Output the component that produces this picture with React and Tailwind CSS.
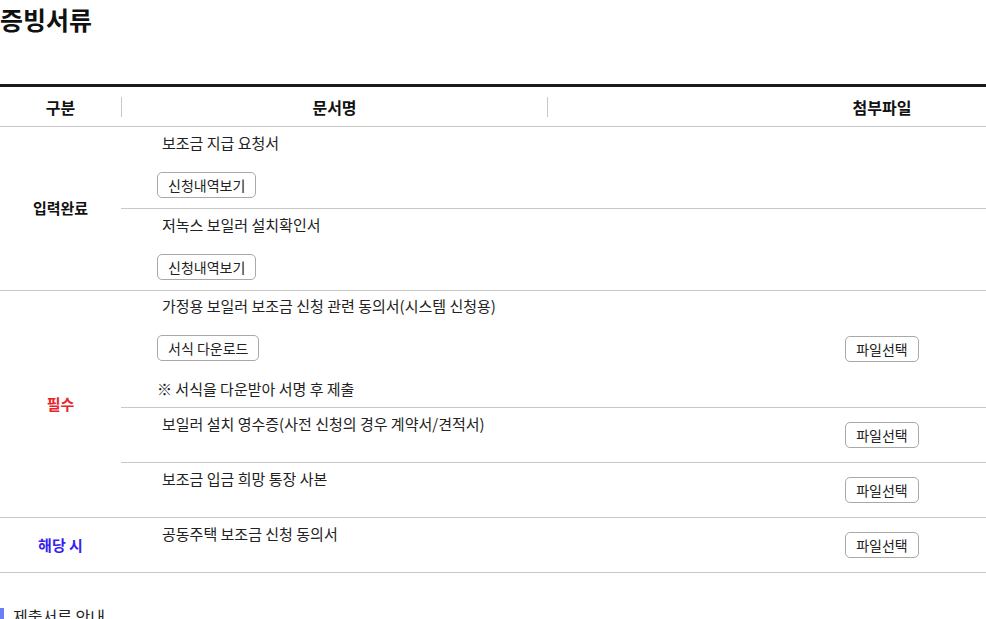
import { useState } from "react";

const groups = [
  {
    label: "입력완료",
    labelClass: "text-[#111]",
    rows: [
      { title: "보조금 지급 요청서", action: "신청내역보기", tall: true },
      { title: "저녹스 보일러 설치확인서", action: "신청내역보기", tall: true },
    ],
  },
  {
    label: "필수",
    labelClass: "text-[#e8242a]",
    rows: [
      {
        title: "가정용 보일러 보조금 신청 관련 동의서(시스템 신청용)",
        action: "서식 다운로드",
        note: "※ 서식을 다운받아 서명 후 제출",
        file: true,
      },
      { title: "보일러 설치 영수증(사전 신청의 경우 계약서/견적서)", file: true },
      { title: "보조금 입금 희망 통장 사본", file: true },
    ],
  },
  {
    label: "해당 시",
    labelClass: "text-[#3a1ef0]",
    rows: [{ title: "공동주택 보조금 신청 동의서", file: true }],
  },
];

function SmallButton({ children, onClick }) {
  return (
    <button
      onClick={onClick}
      className="h-[26px] px-[10px] border border-[#a9a9a9] rounded-[5px] bg-white text-[14px] leading-none text-[#222] whitespace-nowrap"
    >
      {children}
    </button>
  );
}

function DocRow({ row, last, onPick, picked }) {
  return (
    <div className={`flex ${last ? "" : "border-b border-[#c8c8c8]"}`}>
      <div
        className={`flex-1 pl-[36px] ${
          row.note
            ? "pt-[5px] pb-[8px]"
            : row.tall
              ? "pt-[6px] pb-[10px]"
              : "pt-[6px] h-[54px]"
        }`}
      >
        <p className="pl-[5px] text-[15px] leading-[20px] text-[#222]">{row.title}</p>
        {row.action && (
          <div className="mt-[19px] flex">
            <SmallButton>{row.action}</SmallButton>
          </div>
        )}
        {row.note && (
          <p className="mt-[18px] text-[15px] leading-[20px] text-[#222]">{row.note}</p>
        )}
      </div>
      <div className="w-[208px] flex items-center justify-center">
        {row.file && (
          <SmallButton onClick={onPick}>{picked ? "선택됨" : "파일선택"}</SmallButton>
        )}
      </div>
    </div>
  );
}

export default function App() {
  const [picked, setPicked] = useState({});

  return (
    <div className="w-[986px] h-[619px] overflow-hidden bg-white font-['Noto_Sans_CJK_KR',sans-serif] text-[#222]">
      <h2 className="pt-[2px] text-[25px] leading-[34px] font-bold text-[#111]">증빙서류</h2>

      {/* Table */}
      <div className="mt-[48px] border-t-[3px] border-[#1a1a1a]">
        <div className="flex h-[40px] items-center border-b border-[#c8c8c8] text-[16px] font-bold text-[#111]">
          <div className="w-[121px] text-center">구분</div>
          <div className="w-[426px] h-[20px] flex items-center justify-center border-l border-[#c8c8c8]">
            문서명
          </div>
          <div className="w-[231px] h-[20px] border-l border-[#c8c8c8]" />
          <div className="w-[208px] text-center">첨부파일</div>
        </div>

        {groups.map((g) => (
          <div key={g.label} className="flex border-b border-[#c8c8c8]">
            <div
              className={`w-[121px] flex items-center justify-center text-[15px] font-bold ${g.labelClass}`}
            >
              {g.label}
            </div>
            <div className="flex-1 flex flex-col">
              {g.rows.map((row, i) => (
                <DocRow
                  key={row.title}
                  row={row}
                  last={i === g.rows.length - 1}
                  picked={picked[row.title]}
                  onPick={() => setPicked({ ...picked, [row.title]: true })}
                />
              ))}
            </div>
          </div>
        ))}
      </div>

      {/* Guide */}
      <div className="mt-[32px] flex items-center gap-[9px]">
        <span className="w-[4px] h-[16px] bg-[#6a7ff5]" />
        <h3 className="text-[16px] leading-[22px] text-[#222]">제출서류 안내</h3>
      </div>
    </div>
  );
}
